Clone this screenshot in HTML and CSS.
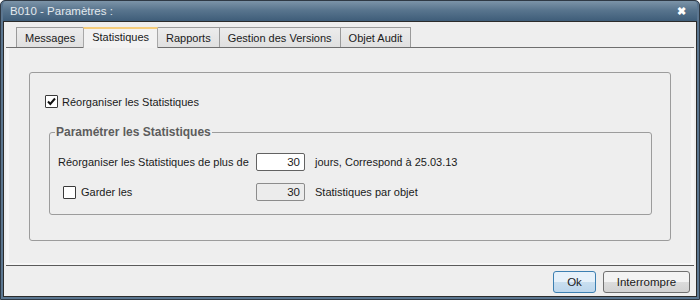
FILE: index.html
```html
<!DOCTYPE html>
<html lang="fr">
<head>
    <meta charset="UTF-8">
    <title>B010 - Paramètres</title>
    <link rel="stylesheet" href="styles.css">
</head>
<body>
    <div class="window">
        <div class="titlebar">
            <span class="title">B010 - Paramètres :</span>
            <span class="close">&#10006;</span>
        </div>
        <div class="client">
            <div class="tabs">
                <div class="tab">Messages</div>
                <div class="tab active">Statistiques</div>
                <div class="tab">Rapports</div>
                <div class="tab">Gestion des Versions</div>
                <div class="tab">Objet Audit</div>
            </div>
            <div class="panel">
                <div class="group">
                    <label class="check-row top">
                        <span class="check checked">
                            <svg width="11" height="11" viewBox="0 0 11 11"><path d="M2 5.5 L4.3 8 L9 2.5" fill="none" stroke="#111" stroke-width="2"/></svg>
                        </span>
                        Réorganiser les Statistiques
                    </label>
                    <fieldset class="subgroup">
                        <legend>Paramétrer les Statistiques</legend>
                        <div class="row">
                            <span class="label">Réorganiser les Statistiques de plus de</span>
                            <span class="field">30</span>
                            <span class="after">jours, Correspond à 25.03.13</span>
                        </div>
                        <div class="row">
                            <span class="label indent"><span class="check"></span>Garder les</span>
                            <span class="field disabled">30</span>
                            <span class="after">Statistiques par objet</span>
                        </div>
                    </fieldset>
                </div>
            </div>
            <div class="footer">
                <button class="btn default">Ok</button>
                <button class="btn">Interrompre</button>
            </div>
        </div>
    </div>
</body>
</html>
```

FILE: styles.css
```css
body {
    margin: 0;
    font-family: "Liberation Sans", Arial, sans-serif;
    font-size: 11px;
    color: #1a1a1a;
}
.window {
    width: 700px;
    height: 300px;
    box-sizing: border-box;
    border: 1px solid #2f3944;
    border-radius: 5px 5px 0 0;
    background: #5b7690;
    padding: 0 2px 2px;
    display: flex;
    flex-direction: column;
}
.titlebar {
    height: 20px;
    display: flex;
    align-items: center;
    justify-content: space-between;
    padding: 0 11px 0 7px;
    background: linear-gradient(#7c94a8, #59758e 45%, #3e5d79);
    border-radius: 4px 4px 0 0;
    color: #e3e9ee;
    font-size: 11.5px;
}
.close {
    color: #fff;
    font-size: 11px;
    font-weight: bold;
}
.client {
    flex: 1;
    border: 1px solid #2b2b2b;
    background: #eeeeee;
    display: flex;
    flex-direction: column;
}
.tabs {
    display: flex;
    padding: 5px 0 0 12px;
    height: 20px;
}
.tab {
    padding: 1px 8px 0;
    border: 1px solid #9a9a9a;
    border-bottom: none;
    margin-right: -1px;
    background: linear-gradient(#ececec, #e0e0e0);
    display: flex;
    align-items: center;
    box-sizing: border-box;
    height: 20px;
}
.tab.active {
    position: relative;
    z-index: 1;
    background: #f2f2f2;
    border-top: 2px solid #f4cd7c;
    border-color: #f4cd7c #a8a8a8 transparent;
    height: 21px;
    margin-bottom: -1px;
    padding-top: 0;
    padding-bottom: 3px;
}
.panel {
    margin: 0 2px;
    border-top: 1px solid #6e6e6e;
    border-bottom: 1px solid #5a5a5a;
    background: #eeeeee;
    box-shadow: inset 3px 0 #f6f6f6, inset -3px 0 #f6f6f6, inset 0 -2px #f6f6f6;
    padding: 24px 23px 24px;
}
.group {
    border: 1px solid #9c9c9c;
    border-radius: 3px;
    padding: 22px 18px 25px 19px;
}
.check-row {
    display: flex;
    align-items: center;
    gap: 4px;
    margin-left: -4px;
}
.check {
    width: 13px;
    height: 13px;
    box-sizing: border-box;
    border: 1px solid #3a3a3a;
    border-radius: 1px;
    background: #fff;
    display: inline-flex;
    align-items: center;
    justify-content: center;
    flex-shrink: 0;
}
.subgroup {
    margin: 17px 0 0;
    border: 1px solid #9c9c9c;
    border-radius: 3px;
    padding: 14px 0 13px 8px;
}
.subgroup legend {
    font-weight: bold;
    color: #5c5c5c;
    padding: 0 1px;
    margin-left: -3px;
    font-size: 12px;
}
.row {
    display: flex;
    align-items: center;
    height: 18px;
}
.row + .row {
    margin-top: 12px;
}
.label {
    width: 198px;
    box-sizing: border-box;
    display: flex;
    align-items: center;
    gap: 5px;
}
.label.indent {
    padding-left: 5px;
}
.field {
    width: 49px;
    height: 18px;
    box-sizing: border-box;
    border: 1px solid #626262;
    border-radius: 2px;
    background: #fff;
    text-align: right;
    padding: 2px 4px 0 0;
    font-size: 11.5px;
}
.field.disabled {
    background: #ececec;
    border-color: #8c8c8c;
}
.after {
    margin-left: 10px;
}
.footer {
    flex: 1;
    display: flex;
    justify-content: flex-end;
    align-items: flex-start;
    gap: 7px;
    padding: 5px 6px 0 0;
}
.btn {
    height: 22px;
    font-family: "Liberation Sans", Arial, sans-serif;
    font-size: 11.5px;
    color: #1a1a1a;
    border: 1px solid #707070;
    border-radius: 3px;
    background: linear-gradient(#f3f3f3 50%, #dcdcdc 50%, #d2d2d2);
    padding: 0;
    width: 87px;
}
.btn.default {
    width: 43px;
    border-color: #3c7fb1;
    background: linear-gradient(#e6f1fa 50%, #c9dff0 50%, #bcd6ec);
}
```
